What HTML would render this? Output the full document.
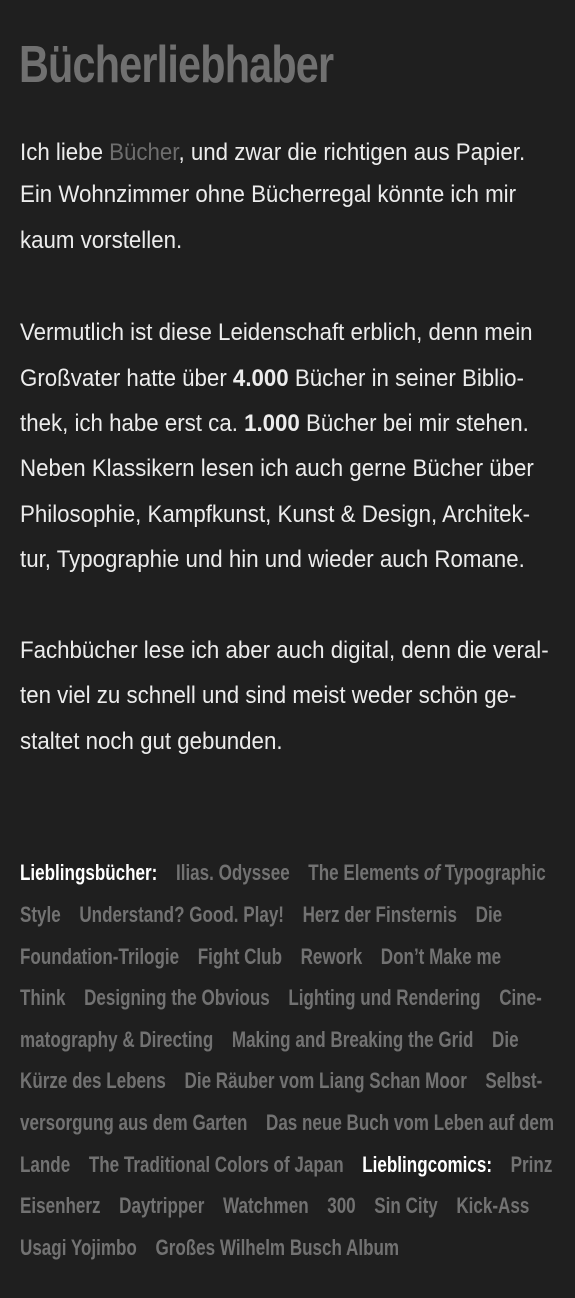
<!DOCTYPE html>
<html><head><meta charset="utf-8"><style>
html,body{margin:0;padding:0;}
body{width:575px;height:1298px;background:#1f1f1f;overflow:hidden;position:relative;font-family:"Liberation Sans",sans-serif;}
.l{position:absolute;left:20px;white-space:nowrap;height:30px;line-height:30px;transform-origin:0 50%;}
h1{position:absolute;left:19px;top:30px;margin:0;font-size:52px;line-height:70px;color:#707070;font-weight:bold;letter-spacing:-1px;transform:scaleX(0.795);transform-origin:0 50%;white-space:nowrap;}
.p{font-size:24px;color:#ececec;transform:scaleX(0.928);}
.p b{font-weight:bold;}
.g{color:#6e6e6e;}
.k{font-size:22px;color:#727272;font-weight:bold;transform:scaleX(0.775);}
.k span{margin-right:24px;}
.k .w{color:#fff;}
</style></head><body>
<h1>Bücherliebhaber</h1>
<div class="l p" style="top:138px">Ich liebe <span class="g">Bücher</span>, und zwar die richtigen aus Papier.</div>
<div class="l p" style="top:180px">Ein Wohnzimmer ohne Bücherregal könnte ich mir</div>
<div class="l p" style="top:226px">kaum vorstellen.</div>
<div class="l p" style="top:318px">Vermutlich ist diese Leidenschaft erblich, denn mein</div>
<div class="l p" style="top:364px">Großvater hatte über <b>4.000</b> Bücher in seiner Biblio-</div>
<div class="l p" style="top:409px">thek, ich habe erst ca. <b>1.000</b> Bücher bei mir stehen.</div>
<div class="l p" style="top:454px">Neben Klassikern lesen ich auch gerne Bücher über</div>
<div class="l p" style="top:500px">Philosophie, Kampfkunst, Kunst &amp; Design, Architek-</div>
<div class="l p" style="top:545px">tur, Typographie und hin und wieder auch Romane.</div>
<div class="l p" style="top:636px">Fachbücher lese ich aber auch digital, denn die veral-</div>
<div class="l p" style="top:681px">ten viel zu schnell und sind meist weder schön ge-</div>
<div class="l p" style="top:727px">staltet noch gut gebunden.</div>
<div class="l k" style="top:858px"><span class="w">Lieblingsbücher:</span><span>Ilias. Odyssee</span><span>The Elements <i>of</i> Typographic</span></div>
<div class="l k" style="top:900px"><span>Style</span><span>Understand? Good. Play!</span><span>Herz der Finsternis</span><span>Die</span></div>
<div class="l k" style="top:942px"><span>Foundation-Trilogie</span><span>Fight Club</span><span>Rework</span><span>Don’t Make me</span></div>
<div class="l k" style="top:983px"><span>Think</span><span>Designing the Obvious</span><span>Lighting und Rendering</span><span>Cine-</span></div>
<div class="l k" style="top:1025px"><span>matography &amp; Directing</span><span>Making and Breaking the Grid</span><span>Die</span></div>
<div class="l k" style="top:1066px"><span>Kürze des Lebens</span><span>Die Räuber vom Liang Schan Moor</span><span>Selbst-</span></div>
<div class="l k" style="top:1108px"><span>versorgung aus dem Garten</span><span>Das neue Buch vom Leben auf dem</span></div>
<div class="l k" style="top:1150px"><span>Lande</span><span>The Traditional Colors of Japan</span><span class="w">Lieblingcomics:</span><span>Prinz</span></div>
<div class="l k" style="top:1191px"><span>Eisenherz</span><span>Daytripper</span><span>Watchmen</span><span>300</span><span>Sin City</span><span>Kick-Ass</span></div>
<div class="l k" style="top:1233px"><span>Usagi Yojimbo</span><span>Großes Wilhelm Busch Album</span></div>
</body></html>
